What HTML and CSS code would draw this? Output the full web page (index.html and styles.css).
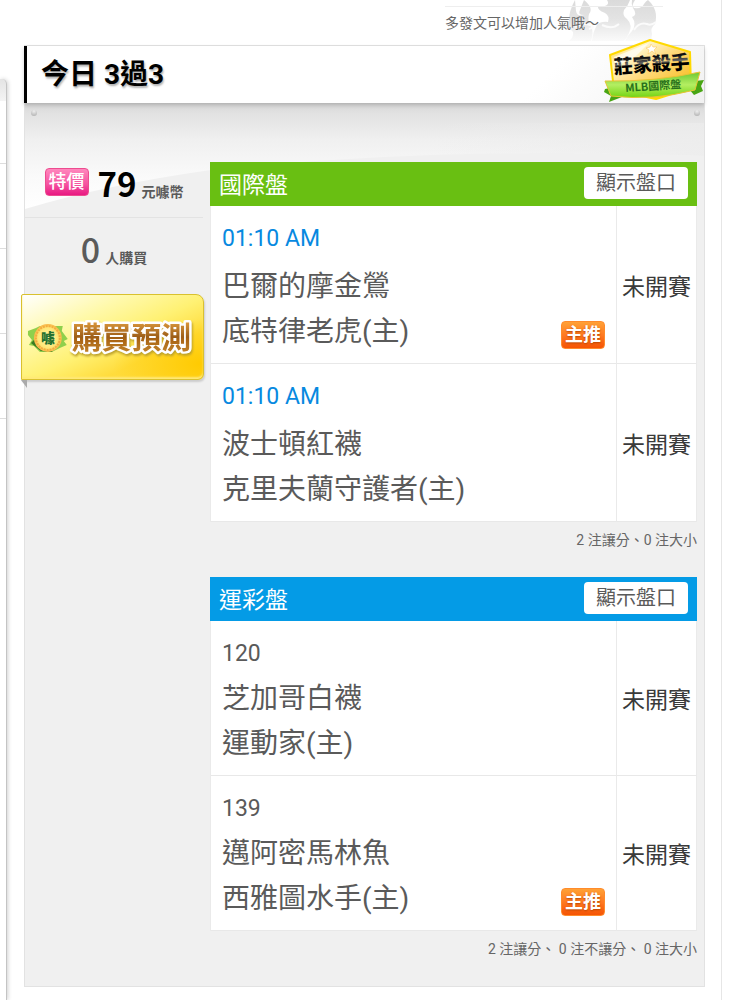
FILE: index.html
```html
<!DOCTYPE html>
<html lang="zh-Hant">
<head>
<meta charset="utf-8">
<meta name="viewport" content="width=device-width, initial-scale=1">
<title>今日 3過3</title>
<link rel="stylesheet" href="styles.css">
</head>
<body>
<div class="page">
  <aside class="rail">
    <ul class="rail-list">
      <li class="rail-item"></li><li class="rail-item"></li><li class="rail-item"></li><li class="rail-item"></li>
    </ul>
  </aside>
  <main class="main">
    <div class="notice">
      <svg class="clover" viewBox="0 0 98 42" aria-hidden="true">
        <defs>
          <linearGradient id="cloverFill" x1="0" y1="0" x2="0" y2="42" gradientUnits="userSpaceOnUse">
            <stop offset="0" stop-color="#dadada"/><stop offset=".45" stop-color="#e3e3e3"/><stop offset="1" stop-color="#fbfbfb"/>
          </linearGradient>
        </defs>
        <g fill="url(#cloverFill)">
          <path d="M40 0H63Q61 6 57 10Q55 16 60 19Q66 25 62 33Q60 38 57 41H25Q26 32 30 25Q34 21 41 22Q43 16 38 13Q30 10 31 6Q35 7 38 6Q43 4 40 0Z"/>
          <path d="M68 0Q64 6 67 8Q75 9 77 4Q79 1 81 0Q92 10 88 24Q83 28 85 34Q84 38 85 41H58Q60 36 65 31Q70 24 65 17Q71 15 66 8Q64 4 65 0Z"/>
          <path d="M8 0Q2 11 2 20Q0 27 6 32Q7 37 2 41H24Q27 33 24 26Q20 21 22 14Q27 8 17 0L13 10Q10 15 17 15Q10 17 9 11Z"/>
        </g>
        <path d="M8 27Q16 22 23 25Q29 27 22 29M35 25Q45 30 52 24M67 30Q72 22 80 24Q84 26 89 22" fill="none" stroke="#fbfbfb" stroke-width="2"/>
      </svg>
      <p class="notice-text">多發文可以增加人氣哦～</p>
    </div>

    <section class="card">
      <header class="card-head">
        <h1 class="card-title">今日 3過3</h1>
        <svg class="medal" viewBox="0 0 102 64" role="img" aria-label="莊家殺手 MLB國際盤">
          <defs>
            <linearGradient id="medalGold" x1="0" y1="0" x2="1" y2="1">
              <stop offset="0" stop-color="#ffc928"/><stop offset=".25" stop-color="#fff6c9"/><stop offset=".5" stop-color="#ffd97a"/><stop offset="1" stop-color="#f3b400"/>
            </linearGradient>
            <linearGradient id="medalRibbon" x1="0" y1="0" x2="0" y2="1">
              <stop offset="0" stop-color="#6cc832"/><stop offset=".5" stop-color="#b4ee62"/><stop offset="1" stop-color="#73d412"/>
            </linearGradient>
            <linearGradient id="medalInk" x1="0" y1="0" x2="0" y2="1">
              <stop offset=".3" stop-color="#111"/><stop offset=".5" stop-color="#666"/><stop offset=".58" stop-color="#000"/>
            </linearGradient>
          </defs>
          <path d="M2 50L12 48L19 58L6 63L8 57L1 53Z" fill="#48a514"/>
          <path d="M92 42L101 41L98 47L100 52L91 56L86 50Z" fill="#48a514"/>
          <path d="M47 1L87 13L88 49L53 60L11 51L7 16Z" fill="url(#medalGold)" stroke="#ffd900" stroke-width="2" stroke-linejoin="round"/>
          <path d="M11 18L46 4L33 17L12 28Z" fill="#fff" opacity=".65"/>
          <path d="M48 5L50 8L54 8L51 11L53 15L49 12L45 15L46 11L43 9L47 8Z" fill="#fff" stroke="#ffc24d" stroke-width=".5"/>
          <path d="M2 42Q52 43 97 33L92 51Q50 62 8 57Z" fill="url(#medalRibbon)" stroke="#e8c335" stroke-width="1"/>
          <g transform="rotate(-4 50 30)">
            <text class="medal-name" x="49" y="32" text-anchor="middle" fill="url(#medalInk)">莊家殺手</text>
            <text class="medal-league" x="49" y="51" text-anchor="middle">MLB國際盤</text>
          </g>
        </svg>
      </header>

      <div class="card-body">
        <svg class="sheen" viewBox="0 0 680 115" preserveAspectRatio="none" aria-hidden="true">
          <defs>
            <linearGradient id="sheenTop" x1="0" y1="0" x2="0" y2="1">
              <stop offset="0" stop-color="#d6d6d6"/><stop offset=".1" stop-color="#e2e2e2"/><stop offset=".35" stop-color="#f0f0f0"/><stop offset=".7" stop-color="#fafafa"/><stop offset="1" stop-color="#fff"/>
            </linearGradient>
            <linearGradient id="sheenFade" x1="0" y1="0" x2="1" y2="0">
              <stop offset=".6" stop-color="#ececec" stop-opacity="0"/><stop offset="1" stop-color="#ececec" stop-opacity=".8"/>
            </linearGradient>
          </defs>
          <path d="M0 0H680V53Q420 43 186 67Q80 82 0 106Z" fill="url(#sheenTop)"/>
          <path d="M0 20H680V53Q420 43 186 67Q80 82 0 106Z" fill="url(#sheenFade)"/>
        </svg>
        <i class="pin pin-left"></i>
        <i class="pin pin-right"></i>

        <aside class="offer">
          <p class="price"><span class="tag tag-sale">特價</span><strong class="price-value">79</strong><span class="unit">元噱幣</span></p>
          <p class="buyers"><span class="buyers-value">0</span><span class="unit">人購買</span></p>
          <button class="buy" type="button">
            <svg class="buy-art" viewBox="0 0 182 84">
              <defs>
                <linearGradient id="buyInk" x1="0" y1="0" x2="0" y2="1">
                  <stop offset=".2" stop-color="#dc993d"/><stop offset=".55" stop-color="#9c5d18"/><stop offset=".6" stop-color="#a96313"/><stop offset="1" stop-color="#c88d32"/>
                </linearGradient>
                <radialGradient id="coin"><stop offset="0" stop-color="#fffbb0"/><stop offset=".7" stop-color="#ffe777"/><stop offset="1" stop-color="#f9b849"/></radialGradient>
              </defs>
              <path d="M6 36L14 33L18 31L41 31L40 36L46 44L42 46L45 50L38 53L30 57H18L12 51L7 50L10 45L6 40Z" fill="#8fd04c"/>
              <path d="M9 48L19 56L31 57L14 43Z" fill="#397b22"/>
              <circle cx="26" cy="43" r="14" fill="url(#coin)"/>
              <circle cx="26" cy="43" r="12" fill="none" stroke="#f3ad3f" stroke-width="2" stroke-dasharray="2 1"/>
              <text class="coin-text" x="26" y="48" text-anchor="middle">噱</text>
              <text class="buy-text" x="110" y="53" text-anchor="middle" fill="url(#buyInk)">購買預測</text>
            </svg>
          </button>
        </aside>

        <div class="boards">
          <section class="board board-intl">
            <header class="board-head"><h2 class="board-title">國際盤</h2><button class="show" type="button">顯示盤口</button></header>
            <table class="games">
              <tbody>
                <tr><td class="game"><p class="time">01:10 AM</p><p class="team">巴爾的摩金鶯</p><p class="team">底特律老虎(主)<span class="tag tag-pick">主推</span></p></td><td class="status">未開賽</td></tr>
                <tr><td class="game"><p class="time">01:10 AM</p><p class="team">波士頓紅襪</p><p class="team">克里夫蘭守護者(主)</p></td><td class="status">未開賽</td></tr>
              </tbody>
            </table>
            <p class="summary">2 注讓分、0 注大小</p>
          </section>
          <section class="board board-lottery">
            <header class="board-head"><h2 class="board-title">運彩盤</h2><button class="show" type="button">顯示盤口</button></header>
            <table class="games">
              <tbody>
                <tr><td class="game"><p class="number">120</p><p class="team">芝加哥白襪</p><p class="team">運動家(主)</p></td><td class="status">未開賽</td></tr>
                <tr><td class="game"><p class="number">139</p><p class="team">邁阿密馬林魚</p><p class="team">西雅圖水手(主)<span class="tag tag-pick">主推</span></p></td><td class="status">未開賽</td></tr>
              </tbody>
            </table>
            <p class="summary">2 注讓分、 0 注不讓分、 0 注大小</p>
          </section>
        </div>
      </div>
    </section>
  </main>
</div>
</body>
</html>
```
FILE: styles.css
```css
* { box-sizing: border-box; }
body { margin: 0; background: #fff; color: #5a5a5a; font-family: Roboto, "Noto Sans CJK TC", sans-serif; }
h1, h2, p, ul { margin: 0; padding: 0; }
button { font-family: inherit; cursor: pointer; }

.page { display: flex; min-height: 100vh; padding-right: 27px; overflow: hidden; }
.rail { flex: 0 0 7px; padding-top: 79px; display: flex; }
.rail-list { flex: 1; list-style: none; border-right: 1px solid #c4c4c4; border-radius: 0 5px 0 0; box-shadow: 1px 0 4px rgba(0, 0, 0, .18); background: linear-gradient(#e4e4e4, #f4f4f4 22px, #fff 22px); }
.rail-item { height: 85px; border-bottom: 1px solid #ddd; }
.main { flex: 1; min-width: 0; padding: 0 16px 0 17px; border-right: 1px solid #e6e6e6; }

.notice { position: relative; height: 45px; display: flex; justify-content: flex-end; }
.notice-text { position: relative; width: 218px; margin: 6px 42px 0 0; padding-top: 6px; border-top: 1px solid #eee; font-size: 14px; line-height: 21px; color: #666; }
.clover { position: absolute; top: 0; right: 40px; width: 98px; height: 42px; }

.card { border: 1px solid #e2e2e2; background: #f0f0f0; }
.card-head { position: relative; z-index: 1; height: 57px; margin-left: -1px; padding-left: 14px; display: flex; align-items: center; border-left: 3px solid #000; background: linear-gradient(135deg, #fff 75%, #f1f1f1); box-shadow: 0 2px 4px rgba(0, 0, 0, .18); }
.card-title { font-size: 28px; line-height: 40px; font-weight: 700; color: #000; text-shadow: 1px 2px 2px rgba(0, 0, 0, .3); }
.medal { position: absolute; right: -1px; top: -7px; width: 102px; height: 64px; }
.medal-name { font-size: 19px; font-weight: 900; font-family: "Noto Sans CJK TC", sans-serif; }
.medal-league { font-size: 11px; font-weight: 700; font-family: "Noto Sans CJK TC", sans-serif; fill: #28701b; }

.card-body { position: relative; display: grid; grid-template-columns: 178px minmax(0, 1fr); column-gap: 7px; padding: 59px 7px 0 0; }
.sheen { position: absolute; left: 0; top: 0; width: 100%; height: 115px; }
.pin { position: absolute; top: 7px; width: 6px; height: 6px; border-radius: 50%; background: radial-gradient(circle at 50% 20%, #eee, #aaa); }
.pin-left { left: 6px; }
.pin-right { right: 4px; }

.offer { position: relative; }
.price, .buyers { display: flex; align-items: baseline; justify-content: center; }
.price { height: 56px; line-height: 44px; border-bottom: 1px solid #e3e3e3; }
.price-value { margin: 0 5px 0 9px; font: 700 33px/42px "Noto Sans CJK TC", sans-serif; color: #000; }
.buyers { height: 76px; padding-top: 10px; }
.buyers-value { margin-right: 5px; font: 500 34px/42px "Noto Sans CJK TC", sans-serif; }
.unit { font-size: 14px; line-height: 20px; font-weight: 700; }
.tag { display: inline-block; width: 44px; height: 28px; border-radius: 4px; color: #fff; text-align: center; font-weight: 700; font-size: 18px; line-height: 26px; }
.tag-sale { align-self: flex-start; margin-top: 6px; border: 1px solid #ed4c8f; background: linear-gradient(#ff87bd, #f5529f 60%, #e81982); font-weight: 500; }
.tag-pick { border: 1px solid #ff8b2c; background: linear-gradient(#ffa136, #ff7a22 50%, #f55404); text-shadow: 0 1px 2px #b84400; }
.buy { position: relative; display: block; width: 183px; height: 86px; margin-left: -4px; padding: 0; border: 1px solid #d9c12e; border-radius: 2px 8px 6px 0; background: radial-gradient(ellipse 90px 45px at 100% 82%, #ffca00, rgba(255, 208, 20, 0)), linear-gradient(155deg, #fff 0, #fff9aa 30%, #fff173 52%, #ffdc3c 72%, #ffd936 100%); box-shadow: 1px 2px 2px rgba(0, 0, 0, .15), inset 0 -2px 2px #ffe878; }
.buy::after { content: ""; position: absolute; left: -1px; top: 85px; border-top: 8px solid #aaa; border-left: 6px solid transparent; }
.buy-art { display: block; width: 100%; height: 84px; }
.buy-text { font: 700 30px "Noto Sans CJK TC", sans-serif; stroke: #fff; stroke-width: 5px; stroke-linejoin: round; paint-order: stroke; filter: drop-shadow(1px 2px 1px #bda12a); }
.coin-text { font: 900 14px "Noto Sans CJK TC", sans-serif; fill: #26702f; }

.boards { position: relative; }
.board-head { height: 44px; display: flex; align-items: center; justify-content: space-between; padding: 0 9px; }
.board-intl .board-head { background: #69bf12; }
.board-lottery .board-head { background: #049be6; }
.board-title { padding-top: 3px; font-size: 23px; line-height: 32px; font-weight: 400; color: #fff; }
.show { height: 32px; margin-bottom: 2px; padding: 0 12px; border: 0; border-radius: 4px; background: #fff; color: #5a5a5a; font-size: 20px; line-height: 30px; }
.games { width: 100%; border-collapse: separate; border-spacing: 0; border-left: 1px solid #eaeaea; background: #fff; }
.games td { border-bottom: 1px solid #e8e8e8; border-right: 1px solid #eaeaea; }
.game { padding: 11px 11px 9px; }
.time, .number { font-size: 23px; line-height: 44px; }
.time { margin-bottom: 3px; color: #0789e0; }
.team { display: flex; justify-content: space-between; font-size: 28px; line-height: 45px; }
.team .tag { margin-top: 12px; }
.status { width: 80px; padding: 0; text-align: center; font-size: 23px; color: #3a3a3a; }
.summary { height: 55px; padding-top: 8px; text-align: right; font-size: 14px; line-height: 21px; color: #666; }
```
